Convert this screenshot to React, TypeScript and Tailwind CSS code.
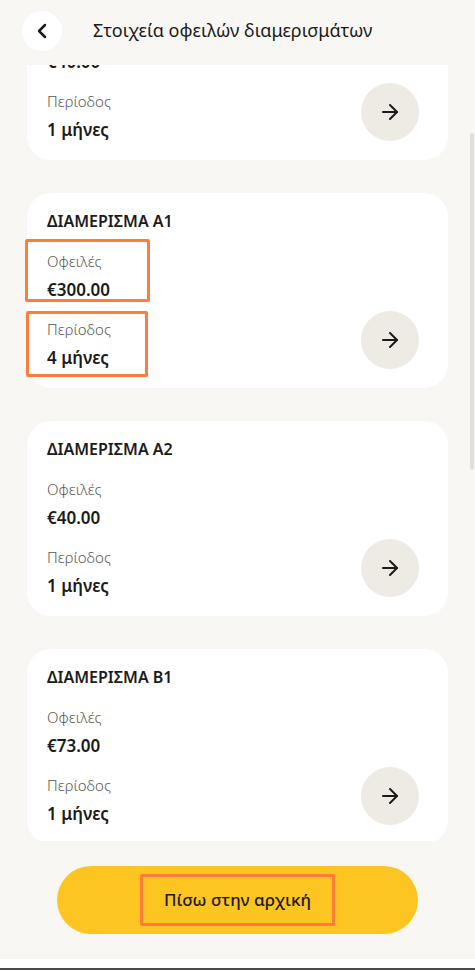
import { ArrowRight, ChevronLeft } from "lucide-react";

type Apartment = {
  name: string;
  debt: string;
  months: number;
  marked?: boolean;
};

const apartments: Apartment[] = [
  { name: "ΔΙΑΜΕΡΙΣΜΑ Α0", debt: "€40.00", months: 1 },
  { name: "ΔΙΑΜΕΡΙΣΜΑ Α1", debt: "€300.00", months: 4, marked: true },
  { name: "ΔΙΑΜΕΡΙΣΜΑ Α2", debt: "€40.00", months: 1 },
  { name: "ΔΙΑΜΕΡΙΣΜΑ Β1", debt: "€73.00", months: 1 },
];

function ApartmentCard({ apt, first }: { apt: Apartment; first?: boolean }) {
  return (
    <div
      className={
        "mx-[27px] flex justify-between rounded-[24px] bg-white pl-[20px] pr-[29px] pt-[18px] pb-[19px] " +
        (first ? "-mt-[100px]" : "mt-[33px]")
      }
    >
      <div className="flex flex-col">
        <div className="text-[16px] font-semibold leading-[20px] text-[#1c1b1a]">{apt.name}</div>

        {/* Οφειλές */}
        <div className="relative mt-[20px]">
          {apt.marked && (
            <span className="absolute -top-[12px] -bottom-[1px] -left-[22px] w-[125px] rounded-[2px] border-[3px] border-[#ff7d3b]" />
          )}
          <div className="text-[15px] font-light leading-[20px] text-[#5a5855]">Οφειλές</div>
          <div className="mt-[8px] text-[17px] font-semibold leading-[22px] text-[#1c1b1a]">{apt.debt}</div>
        </div>

        {/* Περίοδος */}
        <div className="relative mt-[18px]">
          {apt.marked && (
            <span className="absolute -top-[8px] -bottom-[8px] -left-[21px] w-[122px] rounded-[2px] border-[3px] border-[#ff7d3b]" />
          )}
          <div className="text-[15px] font-light leading-[20px] text-[#5a5855]">Περίοδος</div>
          <div className="mt-[8px] text-[17px] font-semibold leading-[22px] text-[#1c1b1a]">
            {apt.months} μήνες
          </div>
        </div>
      </div>

      <button className="flex h-[58px] w-[58px] items-center justify-center self-end rounded-full bg-[#eeebe5]">
        <ArrowRight size={24} strokeWidth={2} className="text-[#1c1b1a]" />
      </button>
    </div>
  );
}

export default function App() {
  return (
    <div
      className="relative flex h-[970px] w-full flex-col overflow-hidden bg-[#f9f7f3]"
      style={{ fontFamily: '"Noto Sans", "Open Sans", sans-serif' }}
    >
      {/* Header */}
      <header className="flex h-[65px] shrink-0 items-center pl-[22px]">
        <button className="mb-[4px] flex h-[40px] w-[40px] items-center justify-center rounded-full bg-white">
          <ChevronLeft size={24} strokeWidth={2.5} className="text-[#1c1b1a]" />
        </button>
        <h1 className="mb-[4px] ml-[31px] text-[18px] font-normal text-[#1c1b1a]">
          Στοιχεία οφειλών διαμερισμάτων
        </h1>
      </header>

      {/* Scrolled list */}
      <div className="h-[776px] shrink-0 overflow-hidden">
        {apartments.map((apt, i) => (
          <ApartmentCard key={apt.name} apt={apt} first={i === 0} />
        ))}
      </div>

      {/* Bottom button */}
      <div className="mx-[57px] mt-[25px] flex h-[68px] items-center justify-center rounded-full bg-[#fcc521]">
        <span className="relative px-[24px] py-[13px] text-[17px] font-medium text-[#1c1b1a]">
          <span className="absolute inset-0 rounded-[2px] border-[3px] border-[#ff7d3b]" />
          Πίσω στην αρχική
        </span>
      </div>

      <div className="flex-1" />
      <div className="h-[9px] shrink-0 bg-white" />
      <div className="h-[2px] shrink-0 bg-[#4a4a4a]" />

      {/* scrollbar thumb */}
      <div className="absolute right-[1px] top-[133px] h-[337px] w-[4px] rounded-full bg-[#e2e0dc]" />
    </div>
  );
}
